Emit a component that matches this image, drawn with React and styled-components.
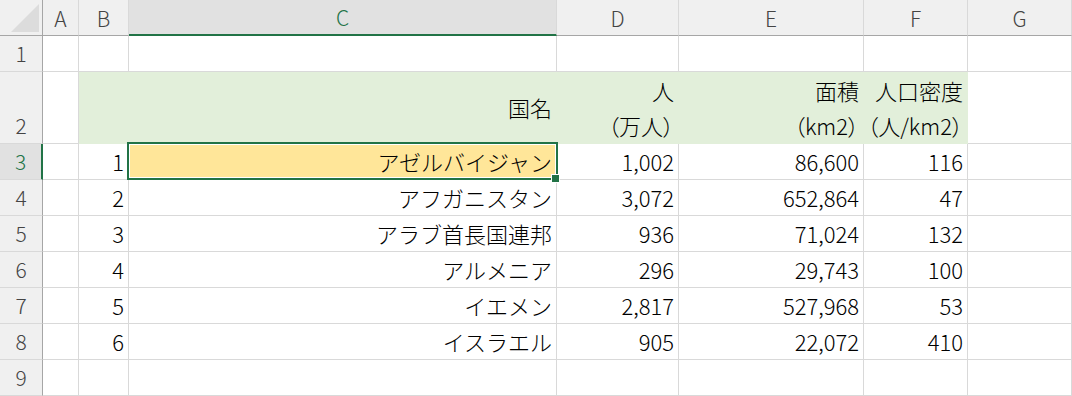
import React from 'react'
import styled, { createGlobalStyle, css } from 'styled-components'

const GREEN = '#217346'
const GRID = '#d9d9d9'
const HEAD_BG = '#f0f0f0'
const HEAD_ACTIVE = '#e1e1e1'
const BAND = '#e2efda'
const PICK = '#ffe699'

const GlobalStyle = createGlobalStyle`
  body {
    margin: 0;
    background: #fff;
    font-family: "Noto Sans CJK JP", "Noto Sans", sans-serif;
    font-weight: 300;
    color: #000;
  }
`

const Sheet = styled.div`
  display: grid;
  grid-template-columns: 43px 36px 50px 428px 122px 185px 104px 104px;
  grid-template-rows: 36px 36px 72px repeat(7, 36px);
  width: 1072px;
  height: 396px;
  overflow: hidden;
`

const Corner = styled.div`
  position: relative;
  background: ${HEAD_BG};
  border-right: 1px solid #a6a6a6;
  border-bottom: 1px solid #a6a6a6;
  box-sizing: border-box;
`

const CornerMark = styled.svg`
  position: absolute;
  right: 3px;
  bottom: 3px;
`

const ColHead = styled.div`
  display: flex;
  align-items: center;
  justify-content: center;
  box-sizing: border-box;
  background: ${HEAD_BG};
  border-right: 1px solid ${GRID};
  border-bottom: 1px solid #a6a6a6;
  font-size: 21px;
  color: #444;
  ${p => p.$active && css`
    background: ${HEAD_ACTIVE};
    color: ${GREEN};
    border-bottom: 2px solid ${GREEN};
  `}
`

const RowHead = styled.div`
  display: flex;
  align-items: flex-end;
  justify-content: center;
  box-sizing: border-box;
  background: ${HEAD_BG};
  border-right: 1px solid #a6a6a6;
  border-bottom: 1px solid ${GRID};
  font-size: 21px;
  line-height: 35px;
  color: #444;
  ${p => p.$active && css`
    background: ${HEAD_ACTIVE};
    color: ${GREEN};
    border-right: 2px solid ${GREEN};
  `}
`

const Cell = styled.div`
  position: relative;
  display: flex;
  flex-direction: column;
  justify-content: center;
  align-items: flex-end;
  box-sizing: border-box;
  padding-right: 4px;
  overflow: ${p => (p.$selected ? 'visible' : 'hidden')};
  background: ${p => p.$fill || '#fff'};
  border-right: 1px solid ${p => p.$fill || GRID};
  border-bottom: 1px solid ${p => p.$fill || GRID};
  font-size: 22px;
  line-height: 35px;
`

const Line = styled.span`
  white-space: nowrap;
  ${p => p.$sub && css`
    font-feature-settings: "palt";
  `}
`

const Selection = styled.div`
  position: absolute;
  top: -2px;
  left: -2px;
  right: -2px;
  bottom: -1px;
  border: 2px solid ${GREEN};
  box-shadow: inset 0 0 0 1px #fff;
  pointer-events: none;
  z-index: 2;
`

const FillHandle = styled.div`
  position: absolute;
  right: -3px;
  bottom: -3px;
  width: 7px;
  height: 7px;
  background: ${GREEN};
  box-shadow: 0 0 0 1px #fff;
  z-index: 3;
`

const columns = ['A', 'B', 'C', 'D', 'E', 'F', 'G']

const rows = [
  { n: 1, cells: ['', '', '', '', '', '', ''] },
  {
    n: 2,
    band: true,
    cells: ['', '', '国名', ['人', '（万人）'], ['面積', '（km2）'], ['人口密度', '（人/km2）'], '']
  },
  { n: 3, cells: ['', '1', 'アゼルバイジャン', '1,002', '86,600', '116', ''] },
  { n: 4, cells: ['', '2', 'アフガニスタン', '3,072', '652,864', '47', ''] },
  { n: 5, cells: ['', '3', 'アラブ首長国連邦', '936', '71,024', '132', ''] },
  { n: 6, cells: ['', '4', 'アルメニア', '296', '29,743', '100', ''] },
  { n: 7, cells: ['', '5', 'イエメン', '2,817', '527,968', '53', ''] },
  { n: 8, cells: ['', '6', 'イスラエル', '905', '22,072', '410', ''] },
  { n: 9, cells: ['', '', '', '', '', '', ''] }
]

const renderValue = value => {
  if (Array.isArray(value)) {
    return value.map((line, i) => (
      <Line key={i} $sub={i > 0}>{line}</Line>
    ))
  }
  return value ? <Line>{value}</Line> : null
}

export default function App () {
  return (
    <>
      <GlobalStyle />
      <Sheet>
        <Corner>
          <CornerMark width='28' height='28' viewBox='0 0 28 28'>
            <polygon points='0,28 28,28 28,0' fill='#dcdcdc' />
          </CornerMark>
        </Corner>
        {columns.map(c => (
          <ColHead key={c} $active={c === 'C'}>{c}</ColHead>
        ))}
        {rows.map(row => (
          <React.Fragment key={row.n}>
            <RowHead $active={row.n === 3}>{row.n}</RowHead>
            {row.cells.map((value, i) => {
              const col = columns[i]
              const inBand = row.band && i >= 1 && i <= 5
              const selected = row.n === 3 && col === 'C'
              return (
                <Cell
                  key={col}
                  $fill={selected ? PICK : inBand ? BAND : null}
                  $selected={selected}
                >
                  {renderValue(value)}
                  {selected && (
                    <>
                      <Selection />
                      <FillHandle />
                    </>
                  )}
                </Cell>
              )
            })}
          </React.Fragment>
        ))}
      </Sheet>
    </>
  )
}
